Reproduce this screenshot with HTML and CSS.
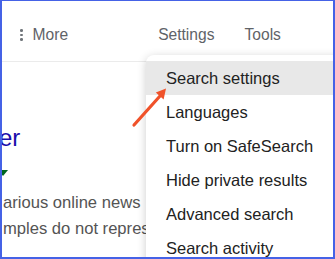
FILE: index.html
```html
<!DOCTYPE html>
<html lang="en">
<head>
  <meta charset="UTF-8">
  <title>Search settings menu</title>
  <link rel="stylesheet" href="styles.css">
</head>
<body>
  <div class="frame">
    <div class="header">
      <div class="more">
        <span class="dots"><i></i><i></i><i></i></span>
        <span>More</span>
      </div>
      <div class="nav">
        <span>Settings</span>
        <span>Tools</span>
      </div>
    </div>

    <div class="result">
      <div class="title">er</div>
      <div class="url"><span class="caret"></span></div>
      <div class="snippet">
        <div>arious online news</div>
        <div>mples do not represent</div>
      </div>
    </div>

    <ul class="menu">
      <li class="active">Search settings</li>
      <li>Languages</li>
      <li>Turn on SafeSearch</li>
      <li>Hide private results</li>
      <li>Advanced search</li>
      <li>Search activity</li>
    </ul>

    <!-- annotation arrow -->
    <svg class="arrow" width="335" height="259" viewBox="0 0 335 259">
      <line x1="134" y1="125" x2="160" y2="96" stroke="#f0522a" stroke-width="3.2" stroke-linecap="round"/>
      <polygon points="166,88.5 163.6,99.5 155.8,92.5" fill="#f0522a"/>
    </svg>
  </div>
</body>
</html>
```

FILE: styles.css
```css
html, body {
  margin: 0;
  padding: 0;
}
body {
  font-family: 'Liberation Sans', Arial, sans-serif;
  background-color: white;
}
.frame {
  position: relative;
  width: 335px;
  height: 259px;
  box-sizing: border-box;
  border: 2px solid #4562e6;
  border-top-width: 1px;
  overflow: hidden;
}
.header {
  display: flex;
  align-items: center;
  height: 61px;
  box-sizing: border-box;
  padding: 8px 0 0 20px;
  border-bottom: 1px solid #ebebeb;
  margin-left: -2px;
  font-size: 15.6px;
  line-height: 18px;
  color: #5f6368;
}
.more {
  display: flex;
  align-items: center;
  gap: 10px;
}
.dots {
  display: flex;
  flex-direction: column;
  gap: 2.2px;
}
.dots i {
  display: block;
  width: 2.6px;
  height: 2.6px;
  border-radius: 50%;
  background-color: #70757a;
}
.nav {
  display: flex;
  gap: 30px;
  margin-left: 90px;
}
.result {
  padding: 60px 0 0 0;
  margin-left: -3px;
}
.title {
  font-size: 24px;
  line-height: 31px;
  color: #1a0dab;
}
.url {
  height: 37px;
  box-sizing: border-box;
  padding-top: 17px;
}
.caret {
  display: block;
  width: 0;
  height: 0;
  margin-left: -1px;
  border-top: 6px solid #006621;
  border-left: 5px solid transparent;
  border-right: 5px solid transparent;
}
.snippet {
  margin-left: 4px;
  font-size: 16.6px;
  line-height: 26.4px;
  color: #545454;
  white-space: nowrap;
}
.menu {
  position: absolute;
  left: 144px;
  top: 54px;
  width: 220px;
  margin: 0;
  padding: 6px 0;
  list-style: none;
  background-color: white;
  border-radius: 8px;
  box-shadow: 0 2px 10px rgba(0, 0, 0, 0.2);
}
.menu li {
  height: 34px;
  line-height: 34px;
  padding-left: 20px;
  font-size: 16.5px;
  color: #222;
}
.menu li.active {
  background-color: #e8e8e8;
}
.arrow {
  position: absolute;
  left: -2px;
  top: -1px;
  pointer-events: none;
}
```
